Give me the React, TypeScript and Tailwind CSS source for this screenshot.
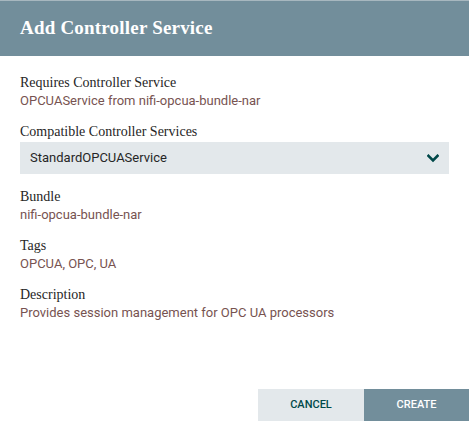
import React from "react";

const fields = [
  { label: "Bundle", value: "nifi-opcua-bundle-nar" },
  { label: "Tags", value: "OPCUA, OPC, UA" },
  { label: "Description", value: "Provides session management for OPC UA processors" },
];

function Chevron() {
  return (
    <svg width="12" height="9" viewBox="0 0 12 9" className="text-[#004849]">
      <path d="M1.5 1.8 L6 6.3 L10.5 1.8" fill="none" stroke="currentColor" strokeWidth="2.6" strokeLinecap="square" />
    </svg>
  );
}

export default function App() {
  return (
    <div className="w-[469px] h-[421px] bg-white flex flex-col overflow-hidden font-['Roboto',sans-serif]">
      <div className="h-[56px] shrink-0 bg-[#728e9b] border-t border-[#a7b7bf] flex items-center px-5">
        <h1 className="text-white text-[19px] font-bold font-['Liberation_Serif','DejaVu_Serif',serif] tracking-[0.2px]">
          Add Controller Service
        </h1>
      </div>

      <div className="flex-1 px-5 pt-[18px]">
        <div className="mb-[13px]">
          <div className="h-[18px] leading-[18px] text-[14px] text-[#262626] font-['Liberation_Serif',serif]">
            Requires Controller Service
          </div>
          <div className="h-[18px] leading-[18px] text-[13px] text-[#775351]">
            OPCUAService from nifi-opcua-bundle-nar
          </div>
        </div>

        <div className="mb-[14px]">
          <div className="h-[18px] leading-[18px] text-[14px] text-[#262626] font-['Liberation_Serif',serif]">
            Compatible Controller Services
          </div>
          <div className="mt-px h-[32px] bg-[#e3e8eb] flex items-center justify-between pl-[10px] pr-[10px]">
            <span className="text-[13px] text-[#262626]">StandardOPCUAService</span>
            <Chevron />
          </div>
        </div>

        {fields.map((f) => (
          <div key={f.label} className="mb-[13px]">
            <div className="h-[18px] leading-[18px] text-[14px] text-[#262626] font-['Liberation_Serif',serif]">
              {f.label}
            </div>
            <div className="h-[18px] leading-[18px] text-[13px] text-[#775351]">{f.value}</div>
          </div>
        ))}
      </div>

      <div className="flex justify-end shrink-0">
        <button className="w-[106px] h-[32px] bg-[#e3e8eb] text-[#004849] text-[11px] font-medium uppercase">
          Cancel
        </button>
        <button className="w-[105px] h-[32px] bg-[#728e9b] text-white text-[11px] font-medium uppercase">
          Create
        </button>
      </div>
    </div>
  );
}
